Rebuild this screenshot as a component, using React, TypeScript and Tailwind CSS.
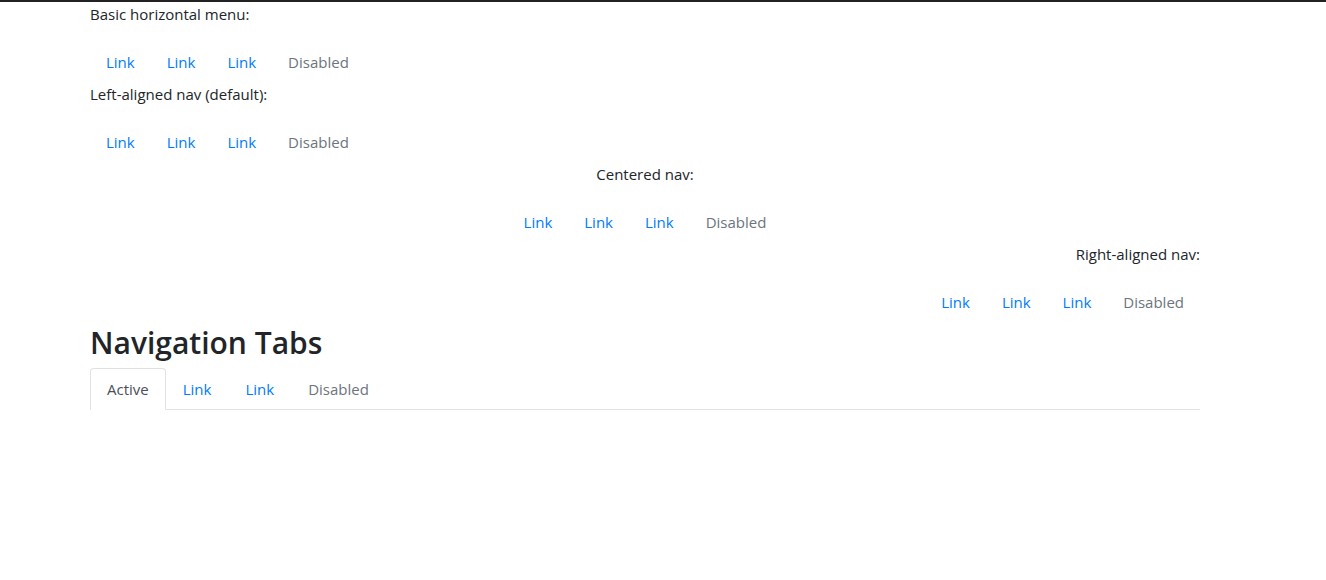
import React from "react";

const font = { fontFamily: '"Open Sans", "Noto Sans", sans-serif' };

function NavRow({ justify }: { justify: string }) {
  return (
    <ul className={"flex mb-0 " + justify}>
      <li>
        <a href="#" className="block px-4 py-2 text-[#007bff]">Link</a>
      </li>
      <li>
        <a href="#" className="block px-4 py-2 text-[#007bff]">Link</a>
      </li>
      <li>
        <a href="#" className="block px-4 py-2 text-[#007bff]">Link</a>
      </li>
      <li>
        <span className="block px-4 py-2 text-[#6c757d]">Disabled</span>
      </li>
    </ul>
  );
}

export default function App() {
  return (
    <div
      className="min-h-[580px] bg-white border-t-2 border-[#222] text-[#212529] text-[15px] leading-6"
      style={font}
    >
      <div className="w-[1110px] ml-[90px]">
        <p className="mb-4">Basic horizontal menu:</p>
        <NavRow justify="justify-start" />

        <p className="mb-4">Left-aligned nav (default):</p>
        <NavRow justify="justify-start" />

        <p className="mb-4 text-center">Centered nav:</p>
        <NavRow justify="justify-center" />

        <p className="mb-4 text-right">Right-aligned nav:</p>
        <NavRow justify="justify-end" />

        <h2 className="text-[30px] leading-[38px] font-semibold mb-1.5 mt-0.5">Navigation Tabs</h2>
        <ul className="flex border-b border-[#dee2e6]">
          <li className="-mb-px">
            <span className="block px-4 py-2 border border-[#dee2e6] border-b-white rounded-t bg-white text-[#495057]">
              Active
            </span>
          </li>
          <li className="-mb-px">
            <a href="#" className="block px-4 py-2 border border-transparent text-[#007bff]">Link</a>
          </li>
          <li className="-mb-px">
            <a href="#" className="block px-4 py-2 border border-transparent text-[#007bff]">Link</a>
          </li>
          <li className="-mb-px">
            <span className="block px-4 py-2 border border-transparent text-[#6c757d]">Disabled</span>
          </li>
        </ul>
      </div>
    </div>
  );
}
